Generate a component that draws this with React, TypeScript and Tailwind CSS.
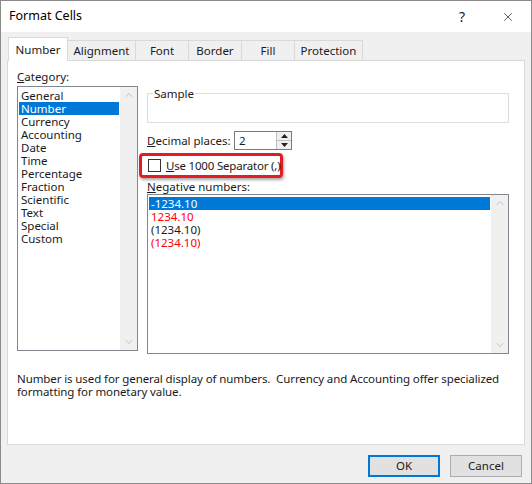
import { X, ChevronUp, ChevronDown } from 'lucide-react'

const tabs = ['Number', 'Alignment', 'Font', 'Border', 'Fill', 'Protection']
const tabWidths = ['w-[60px]', 'w-[69px]', 'w-[54px]', 'w-[54px]', 'w-[54px]', 'w-[69px]']
const categories = ['General', 'Number', 'Currency', 'Accounting', 'Date', 'Time', 'Percentage', 'Fraction', 'Scientific', 'Text', 'Special', 'Custom']

function ScrollBar() {
  return (
    <div className="w-[17px] bg-[#f0f0f0] flex flex-col justify-between items-center py-[2px]">
      <ChevronUp className="w-3 h-3 text-[#c0c0c0]" />
      <ChevronDown className="w-3 h-3 text-[#c0c0c0]" />
    </div>
  )
}

export default function App() {
  return (
    <div className="w-[532px] h-[484px] bg-[#f0f0f0] border border-[#8a8a8a] flex flex-col text-[11.5px] text-[#1a1a1a] overflow-hidden whitespace-nowrap" style={{ fontFamily: '"Noto Sans", "Open Sans", sans-serif' }}>
      <div className="h-[31px] bg-white flex items-center pl-[8px] shrink-0">
        <span className="text-[12.5px] text-black flex-1">Format Cells</span>
        <span className="w-[46px] text-center text-[14px]">?</span>
        <div className="w-[46px] flex justify-center"><X className="w-[14px] h-[14px]" strokeWidth={1.2} /></div>
      </div>
      <div className="flex pl-[7px] pt-[9px] h-[28px] items-end shrink-0">
        {tabs.map((t, i) => (
          <div key={t} className={`${tabWidths[i]} flex items-center justify-center border-t border-l border-r border-[#d9d9d9] ${i === 0 ? 'h-[24px] bg-white -mb-px z-10' : 'h-[20px] bg-[#f0f0f0] -ml-px'}`}>{t}</div>
        ))}
      </div>
      <div className="mx-[6px] h-[385px] bg-white border border-[#d9d9d9] flex flex-col px-[9px] pt-[8px]">
        <div className="flex gap-[9px]">
          <div className="w-[121px] flex flex-col">
            <div className="leading-[16px] mb-[1px]"><u>C</u>ategory:</div>
            <div className="h-[265px] border border-[#828790] flex">
              <div className="flex-1 flex flex-col pt-[2px] px-px">
                {categories.map(c => (
                  <div key={c} className={`leading-[13px] pl-[2px] ${c === 'Number' ? 'bg-[#0078d7] text-white' : ''}`}>{c}</div>
                ))}
              </div>
              <ScrollBar />
            </div>
          </div>
          <div className="flex-1 flex flex-col pt-[24px]">
            <div className="h-[30px] border border-[#dcdcdc] relative mr-[6px]">
              <span className="absolute -top-[9px] left-[5px] bg-white px-[1px]">Sample</span>
            </div>
            <div className="flex items-center mt-[8px] h-[19px]">
              <span className="w-[87px]"><u>D</u>ecimal places:</span>
              <div className="w-[58px] h-[19px] border border-[#7a7a7a] flex">
                <span className="flex-1 pl-[4px] leading-[17px]">2</span>
                <div className="w-[15px] flex flex-col border-l border-[#c0c0c0]">
                  <div className="flex-1 flex items-center justify-center bg-[#f0f0f0] border-b border-[#c0c0c0]"><svg width="7" height="4"><path d="M0 4L3.5 0L7 4z" fill="#222" /></svg></div>
                  <div className="flex-1 flex items-center justify-center bg-[#f0f0f0]"><svg width="7" height="4"><path d="M0 0L3.5 4L7 0z" fill="#222" /></svg></div>
                </div>
              </div>
            </div>
            <div className="mt-[3px] -ml-[8px] w-[144px] h-[25px] border-[3px] border-[#e31b23] rounded-[4px] flex items-center pl-[6px] gap-[5px] shadow-[1px_2px_3px_rgba(0,0,0,0.35)]">
              <div className="w-[13px] h-[13px] border border-[#333] shrink-0" />
              <span className="tracking-[-0.2px]"><u>U</u>se 1000 Separator (,)</span>
            </div>
            <div className="mt-[1px] leading-[15px]"><u>N</u>egative numbers:</div>
            <div className="h-[160px] mr-[6px] border border-[#828790] flex">
              <div className="flex-1 flex flex-col pt-[2px] px-px">
                <div className="leading-[13px] pl-[2px] bg-[#0078d7] text-white">-1234.10</div>
                <div className="leading-[13px] pl-[2px] text-[#ff0000]">1234.10</div>
                <div className="leading-[13px] pl-[2px]">(1234.10)</div>
                <div className="leading-[13px] pl-[2px] text-[#ff0000]">(1234.10)</div>
              </div>
              <ScrollBar />
            </div>
          </div>
        </div>
        <p className="mt-[18px] leading-[13px] whitespace-normal tracking-[-0.1px]">Number is used for general display of numbers.&nbsp; Currency and Accounting offer specialized<br />formatting for monetary value.</p>
      </div>
      <div className="flex justify-end gap-[10px] pr-[9px] pt-[10px]">
        <button className="w-[72px] h-[22px] bg-[#e1e1e1] border-2 border-[#0078d7]">OK</button>
        <button className="w-[72px] h-[22px] bg-[#e1e1e1] border border-[#adadad]">Cancel</button>
      </div>
    </div>
  )
}
